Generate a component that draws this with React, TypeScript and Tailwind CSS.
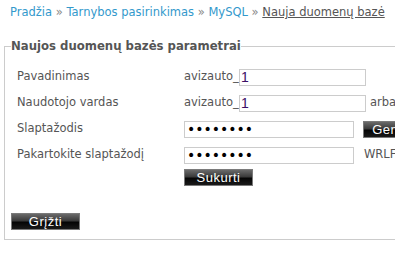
import React from 'react';

const font = { fontFamily: '"DejaVu Sans", Verdana, sans-serif' };

const DarkButton: React.FC<{ label: string; className?: string }> = ({ label, className = '' }) => (
  <button
    type="button"
    className={`h-[17px] w-[69px] border border-[#7a7a7a] bg-[linear-gradient(to_bottom,#6a6a6a_0%,#3a3a3a_45%,#050505_55%,#1a1a1a_100%)] text-[13px] leading-[15px] text-white font-['Liberation_Sans',sans-serif] tracking-[0.5px] ${className}`}
  >
    {label}
  </button>
);

const Row: React.FC<{ label: string; children: React.ReactNode }> = ({ label, children }) => (
  <div className="flex h-[26px] items-center">
    <span className="w-[167px] shrink-0 text-[11.5px] text-[#555]">{label}</span>
    {children}
  </div>
);

export default function App() {
  return (
    <div className="w-[395px] h-[260px] overflow-hidden bg-white" style={font}>
      <div className="w-[600px]">
        {/* Breadcrumb */}
        <div className="pl-[10px] pt-[5px] text-[11.5px] leading-[14px] text-[#888]">
          <a className="text-[#3399cc]">Pradžia</a>
          <span> » </span>
          <a className="text-[#3399cc]">Tarnybos pasirinkimas</a>
          <span> » </span>
          <a className="text-[#3399cc]">MySQL</a>
          <span> » </span>
          <a className="text-[#555] underline">Nauja duomenų bazė</a>
        </div>

        <fieldset className="ml-[4px] mt-[20px] w-[560px] h-[201px] border border-[#cccccc] pl-[6px] pr-0">
          <legend className="text-[11.7px] font-bold leading-[14px] text-[#555]">
            Naujos duomenų bazės parametrai
          </legend>

          <div className="pl-[6px] pt-[11px]">
            <Row label="Pavadinimas">
              <span className="w-[55px] text-[11.5px] text-[#555]">avizauto_</span>
              <input
                readOnly
                defaultValue="1"
                className="h-[17px] w-[127px] border border-[#cccccc] pl-[1px] text-[14px] leading-[15px] text-[#3c0f66] outline-none font-['Liberation_Sans',sans-serif]"
              />
            </Row>
            <Row label="Naudotojo vardas">
              <span className="w-[55px] text-[11.5px] text-[#555]">avizauto_</span>
              <input
                readOnly
                defaultValue="1"
                className="h-[17px] w-[127px] border border-[#cccccc] pl-[1px] text-[14px] leading-[15px] text-[#3c0f66] outline-none font-['Liberation_Sans',sans-serif]"
              />
              <span className="ml-[4px] text-[11.5px] text-[#555]">arba</span>
            </Row>
            <Row label="Slaptažodis">
              <input
                readOnly
                type="password"
                defaultValue="abcdefgh"
                className="h-[17px] w-[170px] border border-[#cccccc] px-[2px] text-[14px] text-black outline-none"
              />
              <DarkButton label="Generuoti" className="ml-[9px] w-[80px]" />
            </Row>
            <Row label="Pakartokite slaptažodį">
              <input
                readOnly
                type="password"
                defaultValue="abcdefgh"
                className="h-[17px] w-[170px] border border-[#cccccc] px-[2px] text-[14px] text-black outline-none"
              />
              <span className="ml-[10px] text-[11.5px] text-[#555]">WRLFQ8pZ</span>
            </Row>
            <div className="flex h-[20px] items-start pl-[167px] pt-[1px]">
              <DarkButton label="Sukurti" />
            </div>
          </div>

          <div className="pt-[21px]">
            <DarkButton label="Grįžti" />
          </div>
        </fieldset>
      </div>
    </div>
  );
}
